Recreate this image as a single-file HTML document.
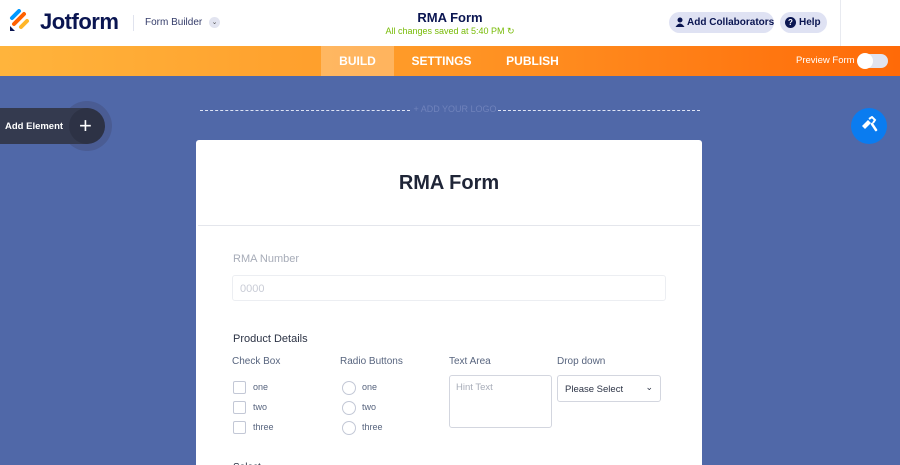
<!DOCTYPE html>
<html><head><meta charset="utf-8"><style>
*{box-sizing:border-box;margin:0;padding:0}
html,body{width:900px;height:465px;overflow:hidden}
body{background:#5068a8;font-family:"Liberation Sans",sans-serif;position:relative}
.hdr{position:absolute;left:0;top:0;width:900px;height:46px;background:#fff}
.bar{position:absolute;left:0;top:46px;width:900px;height:30px;background:linear-gradient(90deg,#ffb43c,#ff9a28 45%,#ff6a08)}
.abs{position:absolute}
.pill{position:absolute;top:12px;height:21px;border-radius:11px;background:#dfe2f3;color:#0a1551;font-size:10px;font-weight:bold;line-height:21px;white-space:nowrap}
.tab{position:absolute;top:46px;height:30px;line-height:30px;color:#fff;font-size:12px;font-weight:bold;text-align:center}
.card{position:absolute;left:196px;top:140px;width:506px;height:340px;background:#fff;border-radius:3px}
.lbl{position:absolute;font-size:10px;color:#57647e}
.opt{position:absolute;font-size:9px;color:#57647e}
.cb{position:absolute;width:13px;height:13px;border:1px solid #c3c8d6;border-radius:2px}
.rb{position:absolute;width:14px;height:14px;border:1px solid #c3c8d6;border-radius:50%}
</style></head><body>
<div class="hdr"></div>
<svg class="abs" style="left:9px;top:9px" width="22" height="24" viewBox="0 0 22 24">
<path d="M3 9 L10 2" stroke="#0099ff" stroke-width="4" stroke-linecap="round"/>
<path d="M5 15 L15 5" stroke="#ff6100" stroke-width="4" stroke-linecap="round"/>
<path d="M12 18 L18 12" stroke="#ffb629" stroke-width="4" stroke-linecap="round"/>
<path d="M1 17 L1 22 L6 22 Z" fill="#0a1551"/>
</svg>
<div class="abs" style="left:40px;top:9px;font-size:22px;font-weight:bold;color:#0a1551;letter-spacing:-0.5px">Jotform</div>
<div class="abs" style="left:133px;top:15px;width:1px;height:16px;background:#e0e3ee"></div>
<div class="abs" style="left:145px;top:17px;font-size:10px;color:#343c6a">Form Builder</div>
<div class="abs" style="left:209px;top:17px;width:11px;height:11px;border-radius:50%;background:#e2e4f0;color:#555;font-size:7px;text-align:center;line-height:11px">⌄</div>
<div class="abs" style="left:300px;top:10px;width:300px;text-align:center;font-size:13px;font-weight:bold;color:#0a1551">RMA Form</div>
<div class="abs" style="left:300px;top:26px;width:300px;text-align:center;font-size:9px;color:#78bb07">All changes saved at 5:40 PM ↻</div>
<div class="pill" style="left:669px;width:105px;padding-left:18px">Add Collaborators</div>
<svg class="abs" style="left:675px;top:17px" width="10" height="10" viewBox="0 0 10 10"><circle cx="5" cy="3" r="2.5" fill="#0a1551"/><path d="M0.5 10 Q5 3 9.5 10Z" fill="#0a1551"/></svg>
<div class="pill" style="left:780px;width:47px;padding-left:19px">Help</div>
<div class="abs" style="left:785px;top:17px;width:11px;height:11px;border-radius:50%;background:#0a1551;color:#fff;font-size:8px;text-align:center;line-height:11px;font-weight:bold">?</div>
<div class="abs" style="left:840px;top:0;width:1px;height:46px;background:#e8eaf0"></div>
<div class="bar"></div>
<div class="tab" style="left:321px;width:73px;background:rgba(255,255,255,0.25)">BUILD</div>
<div class="tab" style="left:405px;width:73px">SETTINGS</div>
<div class="tab" style="left:500px;width:65px">PUBLISH</div>
<div class="abs" style="left:796px;top:55px;font-size:9.5px;color:#fff">Preview Form</div>
<div class="abs" style="left:858px;top:54px;width:30px;height:14px;border-radius:7px;background:#e0e3ef"></div>
<div class="abs" style="left:857px;top:53px;width:16px;height:16px;border-radius:50%;background:#fff"></div>
<div class="abs" style="left:200px;top:110px;width:210px;border-top:1px dashed #dfe4f5"></div>
<div class="abs" style="left:410px;top:104px;width:90px;font-size:9px;color:#6f82bb;text-align:center">+ ADD YOUR LOGO</div>
<div class="abs" style="left:498px;top:110px;width:202px;border-top:1px dashed #dfe4f5"></div>
<div class="abs" style="left:62px;top:101px;width:50px;height:50px;border-radius:50%;background:#4a5c93"></div>
<div class="abs" style="left:0;top:108px;width:104px;height:36px;border-radius:0 18px 18px 0;background:#343a4f"></div>
<div class="abs" style="left:69px;top:108px;width:36px;height:36px;border-radius:50%;background:#2d3245"></div>
<div class="abs" style="left:5px;top:121px;font-size:9.5px;font-weight:bold;color:#fff">Add Element</div>
<div class="abs" style="left:79px;top:113px;font-size:22px;color:#fff;font-weight:300">+</div>
<div class="abs" style="left:851px;top:108px;width:36px;height:36px;border-radius:50%;background:#0a7cf0"></div>
<svg class="abs" style="left:859px;top:116px" width="20" height="20" viewBox="0 0 20 20"><path d="M3 10 L9 4 L12 7 L6 13 Z" fill="#fff"/><path d="M10 3 L13 1 L16 4 L14 7" stroke="#fff" stroke-width="2" fill="none"/><path d="M13 8 L17 14" stroke="#fff" stroke-width="2.5" stroke-linecap="round"/></svg>
<div class="card">
<div class="abs" style="left:0;top:32px;width:506px;text-align:center;font-size:20px;font-weight:bold;color:#1f2537">RMA Form</div>
<div class="abs" style="left:2px;top:85px;width:502px;height:1px;background:#e4e6ec"></div>
<div class="lbl" style="left:37px;top:113px;font-size:11px;color:#a7acb8">RMA Number</div>
<div class="abs" style="left:36px;top:135px;width:434px;height:26px;border:1px solid #eceef2;border-radius:3px;font-size:11px;color:#c9ccd6;padding:7px 0 0 7px">0000</div>
<div class="abs" style="left:37px;top:193px;font-size:11px;color:#2c3345">Product Details</div>
<div class="lbl" style="left:36px;top:216px">Check Box</div>
<div class="lbl" style="left:144px;top:216px">Radio Buttons</div>
<div class="lbl" style="left:253px;top:216px">Text Area</div>
<div class="lbl" style="left:361px;top:216px">Drop down</div>
<div class="cb" style="left:37px;top:241px"></div><div class="opt" style="left:57px;top:242px">one</div>
<div class="cb" style="left:37px;top:261px"></div><div class="opt" style="left:57px;top:262px">two</div>
<div class="cb" style="left:37px;top:281px"></div><div class="opt" style="left:57px;top:282px">three</div>
<div class="rb" style="left:146px;top:241px"></div><div class="opt" style="left:166px;top:242px">one</div>
<div class="rb" style="left:146px;top:261px"></div><div class="opt" style="left:166px;top:262px">two</div>
<div class="rb" style="left:146px;top:281px"></div><div class="opt" style="left:166px;top:282px">three</div>
<div class="abs" style="left:253px;top:235px;width:103px;height:53px;border:1px solid #d3d6df;border-radius:3px;font-size:9.5px;color:#a7acb8;padding:6px 0 0 6px">Hint Text</div>
<div class="abs" style="left:361px;top:235px;width:104px;height:27px;border:1px solid #d3d6df;border-radius:3px;font-size:9.5px;color:#2c3345;padding:8px 0 0 7px">Please Select<span style="position:absolute;right:7px;top:6px;font-size:9px">⌄</span></div>
<div class="abs" style="left:37px;top:322px;font-size:10px;color:#2c3345">Select</div>
</div>
</body></html>
